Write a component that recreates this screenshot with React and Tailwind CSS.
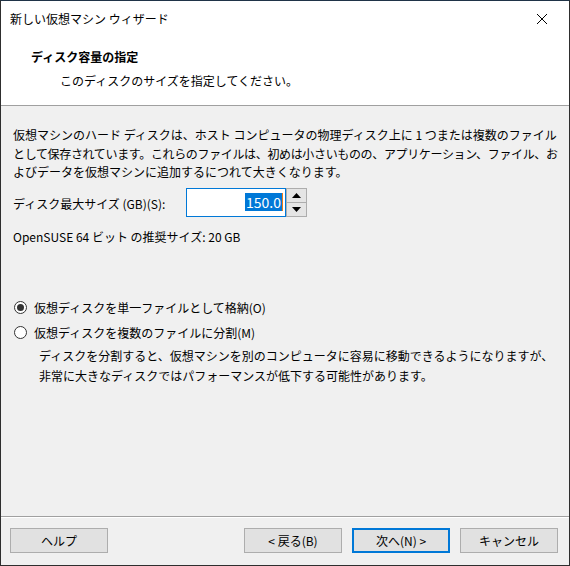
import { useState } from "react";

function Radio({ checked, label, onClick }) {
  return (
    <button type="button" onClick={onClick} className="flex items-center gap-[7px] text-left">
      <span className="flex h-[13px] w-[13px] items-center justify-center rounded-full border border-[#333] bg-white">
        {checked && <span className="h-[7px] w-[7px] rounded-full bg-[#333]" />}
      </span>
      <span>{label}</span>
    </button>
  );
}

function WizButton({ children, primary }) {
  return (
    <button
      type="button"
      className={
        primary
          ? "h-[25px] w-[98px] border-2 border-[#0078d7] bg-[#e1e1e1] text-[12px]"
          : "h-[25px] w-[98px] border border-[#adadad] bg-[#e1e1e1] text-[12px]"
      }
    >
      {children}
    </button>
  );
}

export default function App() {
  const [mode, setMode] = useState("single");

  return (
    <div className="flex h-[566px] w-[570px] flex-col border border-[#2e2e2e] border-t-[#1f3347] bg-[#f0f0f0] font-['Noto_Sans_CJK_JP','Noto_Sans',sans-serif] text-[12px] text-black">
      {/* title + header */}
      <div className="bg-white">
        <div className="flex h-[36px] items-center justify-between pl-[9px] pr-[21px]">
          <span>新しい仮想マシン ウィザード</span>
          <svg width="12" height="12" viewBox="0 0 12 12">
            <path d="M1 1 L11 11 M11 1 L1 11" stroke="#000" strokeWidth="1" />
          </svg>
        </div>
        <div className="h-[68px] pt-[11px]">
          <div className="pl-[30px] font-bold leading-[18px]">ディスク容量の指定</div>
          <div className="mt-[6px] pl-[59px] leading-[18px]">このディスクのサイズを指定してください。</div>
        </div>
      </div>
      <div className="h-px bg-[#a0a0a0]" />

      {/* body */}
      <div className="flex-1 px-[12px] pt-[20px]">
        <p className="whitespace-nowrap leading-[18.5px]">
          仮想マシンのハード ディスクは、ホスト コンピュータの物理ディスク上に 1 つまたは複数のファイル
          <br />
          <span className="tracking-[-0.35px]">
            として保存されています。これらのファイルは、初めは小さいものの、アプリケーション、ファイル、お
          </span>
          <br />
          よびデータを仮想マシンに追加するにつれて大きくなります。
        </p>

        <div className="mt-[6px] flex items-center">
          <span className="mt-[3px] w-[173px]">ディスク最大サイズ (GB)(S):</span>
          <div className="flex h-[29px] w-[100px] items-center justify-end border border-[#0078d7] bg-white pr-[2px]">
            <span className="bg-[#0078d7] px-px text-[14px] leading-[18px] text-white">150.0</span>
            <span className="h-[18px] w-px bg-[#f07b16]" />
          </div>
          <div className="flex h-[29px] w-[21px] flex-col border border-[#adadad] bg-[#e5e5e5]">
            <div className="flex flex-1 items-center justify-center border-b border-[#adadad]">
              <svg width="9" height="5" viewBox="0 0 9 5">
                <path d="M0 5 L4.5 0 L9 5 Z" fill="#000" />
              </svg>
            </div>
            <div className="flex flex-1 items-center justify-center">
              <svg width="9" height="5" viewBox="0 0 9 5">
                <path d="M0 0 L9 0 L4.5 5 Z" fill="#000" />
              </svg>
            </div>
          </div>
        </div>

        <div className="mt-[11px] leading-[18px]">OpenSUSE 64 ビット の推奨サイズ: 20 GB</div>

        <div className="mt-[53px] flex flex-col gap-[7px] pl-[1px]">
          <Radio checked={mode === "single"} label="仮想ディスクを単一ファイルとして格納(O)" onClick={() => setMode("single")} />
          <Radio checked={mode === "split"} label="仮想ディスクを複数のファイルに分割(M)" onClick={() => setMode("split")} />
        </div>
        <p className="mt-[4px] whitespace-nowrap pl-[26px] leading-[20px]">
          ディスクを分割すると、仮想マシンを別のコンピュータに容易に移動できるようになりますが、
          <br />
          非常に大きなディスクではパフォーマンスが低下する可能性があります。
        </p>
      </div>

      {/* footer */}
      <div className="h-px bg-[#a0a0a0]" />
      <div className="h-px bg-white" />
      <div className="flex h-[47px] items-start pl-[9px] pr-[11px] pt-[10px]">
        <WizButton>ヘルプ</WizButton>
        <div className="flex-1" />
        <div className="flex gap-[10px]">
          <WizButton>&lt; 戻る(B)</WizButton>
          <WizButton primary>次へ(N) &gt;</WizButton>
          <WizButton>キャンセル</WizButton>
        </div>
      </div>
    </div>
  );
}
